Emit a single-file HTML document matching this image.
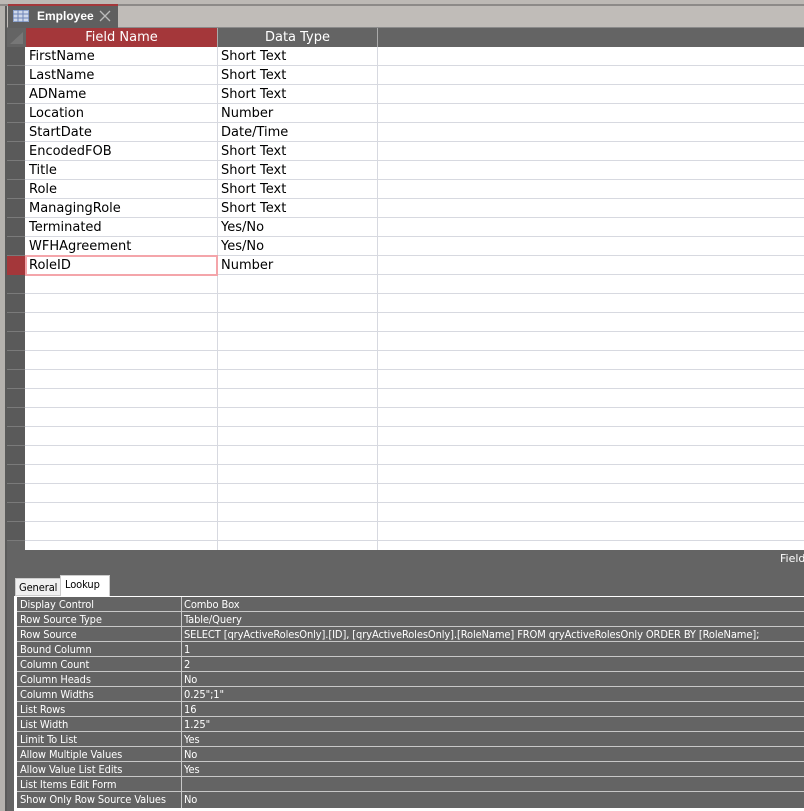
<!DOCTYPE html>
<html><head><meta charset="utf-8"><style>
*{margin:0;padding:0;box-sizing:border-box}
body{width:804px;height:811px;overflow:hidden;background:#646464;font-family:"Segoe UI","DejaVu Sans","Liberation Sans",sans-serif;position:relative}
.a{position:absolute}
.t{font-size:13px;color:#000;white-space:nowrap}
.p{font-size:11px;color:#fff;white-space:nowrap;font-family:"DejaVu Sans Condensed","DejaVu Sans",sans-serif;letter-spacing:-0.1px}
</style></head><body>
<div class="a" style="left:0;top:0;width:804px;height:4px;background:#bdb9b5"></div>
<div class="a" style="left:0;top:4px;width:804px;height:2px;background:#8d8a88"></div>
<div class="a" style="left:0;top:6px;width:804px;height:21px;background:#c0bcb8"></div>
<div class="a" style="left:0;top:27px;width:804px;height:1px;background:#8a8a8a"></div>
<div class="a" style="left:0;top:6px;width:5px;height:805px;background:#b5b2ae"></div>
<div class="a" style="left:5px;top:6px;width:2px;height:805px;background:#5a5a5a"></div>
<div class="a" style="left:8px;top:4px;width:110px;height:24px;background:#5f5f5f;border-top:2px solid #a4373a"></div>
<svg class="a" style="left:13px;top:10px" width="16" height="12"><rect x="0.5" y="0.5" width="15" height="11" fill="#cfd8ea" stroke="#8ea3cc"/><path d="M0 4H16M0 8H16M5 0V12M10 0V12" stroke="#6f86b8"/></svg>
<div class="a" style="left:37px;top:9px;font-size:12px;font-weight:bold;color:#fff;font-family:'Liberation Sans',sans-serif">Employee</div>
<svg class="a" style="left:99px;top:10px" width="12" height="12"><path d="M1 1L11 11M11 1L1 11" stroke="#bbb" stroke-width="1.3"/></svg>
<div class="a" style="left:7px;top:28px;width:797px;height:19px;background:#646464"></div>
<div class="a" style="left:26px;top:28px;width:191px;height:19px;background:#a4373a;color:#fff;font-size:13px;text-align:center;line-height:20px">Field Name</div>
<div class="a" style="left:218px;top:28px;width:159px;height:19px;color:#fff;font-size:13px;text-align:center;line-height:20px">Data Type</div>
<div class="a" style="left:217px;top:28px;width:1px;height:19px;background:#aaa"></div>
<div class="a" style="left:377px;top:28px;width:1px;height:19px;background:#aaa"></div>
<svg class="a" style="left:9px;top:31px" width="15" height="14"><path d="M14 1V13H1Z" fill="#777"/></svg>
<div class="a" style="left:25px;top:47px;width:779px;height:503px;background:#fff"></div>
<div class="a" style="left:7px;top:47px;width:18px;height:494px;background:#5a5a5a"></div>
<div id="g"></div>
<div class="a" style="left:217px;top:47px;width:1px;height:503px;background:#d7d9e0"></div>
<div class="a" style="left:377px;top:47px;width:1px;height:503px;background:#d7d9e0"></div>
<div class="a" style="left:7px;top:256px;width:18px;height:19px;background:#a4373a"></div>
<div class="a" style="left:25px;top:255px;width:193px;height:21px;border:2px solid #f4a5aa"></div>
<div class="a" style="left:780px;top:552px;font-size:11px;color:#fff">Field</div>
<div class="a" style="left:15px;top:578px;width:46px;height:18px;background:#f0f0f0;border:1px solid #ccc"></div>
<div class="a p" style="left:19px;top:581px;color:#000">General</div>
<div class="a" style="left:60px;top:575px;width:50px;height:22px;background:#fff;border:1px solid #ccc;border-bottom:none"></div>
<div class="a p" style="left:65px;top:578px;color:#000">Lookup</div>
<div class="a" style="left:14px;top:596px;width:790px;height:215px;background:#fff"></div>
<div class="a" style="left:17px;top:597px;width:787px;height:211px;background:#646464"></div>
<div id="pp"></div>
<div class="a" style="left:181px;top:597px;width:1px;height:211px;background:#c8c8c8"></div>
<script>
var f=[["FirstName","Short Text"],["LastName","Short Text"],["ADName","Short Text"],["Location","Number"],["StartDate","Date/Time"],["EncodedFOB","Short Text"],["Title","Short Text"],["Role","Short Text"],["ManagingRole","Short Text"],["Terminated","Yes/No"],["WFHAgreement","Yes/No"],["RoleID","Number"]];
var h="";
for(var i=0;i<26;i++){var y=47+i*19;
h+='<div class="a" style="left:25px;top:'+(y+18)+'px;width:779px;height:1px;background:#d7d9e0"></div>';
h+='<div class="a" style="left:7px;top:'+(y+18)+'px;width:18px;height:1px;background:#7a7a7a"></div>';
if(i<f.length){h+='<div class="a t" style="left:29px;top:'+(y+2)+'px">'+f[i][0]+'</div><div class="a t" style="left:221px;top:'+(y+2)+'px">'+f[i][1]+'</div>';}}
document.getElementById("g").innerHTML=h;
var p=[["Display Control","Combo Box"],["Row Source Type","Table/Query"],["Row Source","SELECT [qryActiveRolesOnly].[ID], [qryActiveRolesOnly].[RoleName] FROM qryActiveRolesOnly ORDER BY [RoleName];"],["Bound Column","1"],["Column Count","2"],["Column Heads","No"],["Column Widths","0.25\";1\""],["List Rows","16"],["List Width","1.25\""],["Limit To List","Yes"],["Allow Multiple Values","No"],["Allow Value List Edits","Yes"],["List Items Edit Form",""],["Show Only Row Source Values","No"]];
h="";
for(var j=0;j<p.length;j++){var y=597+j*15;
if(j>0)h+='<div class="a" style="left:17px;top:'+(y-1)+'px;width:787px;height:1px;background:#c8c8c8"></div>';
h+='<div class="a p" style="left:20px;top:'+(y+1)+'px">'+p[j][0]+'</div><div class="a p" style="left:184px;top:'+(y+1)+'px">'+p[j][1]+'</div>';}
document.getElementById("pp").innerHTML=h;
</script>
</body></html>
